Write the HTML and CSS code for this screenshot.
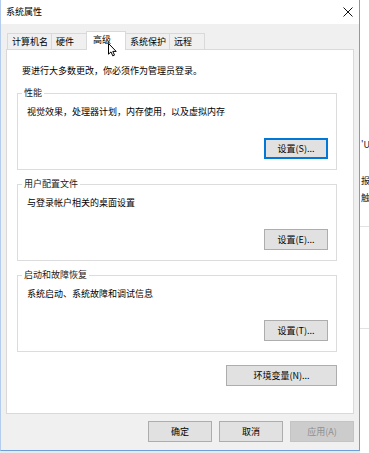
FILE: index.html
```html
<!DOCTYPE html>
<html lang="zh-CN">
<head>
  <meta charset="UTF-8" />
  <title>系统属性</title>
  <link rel="stylesheet" href="styles.css">
</head>
<body>
  <div class="desk">
    <div class="dialog">
      <div class="titlebar">
        <span class="title">系统属性</span>
        <svg class="close" width="10" height="10" viewBox="0 0 10 10">
          <path d="M0.5 0.5 L9.5 9.5 M9.5 0.5 L0.5 9.5" stroke="#111" stroke-width="1" fill="none" />
        </svg>
      </div>

      <div class="dialog-body">
        <div class="tabs">
          <div class="tab">计算机名</div>
          <div class="tab">硬件</div>
          <div class="tab active">高级
            <svg class="cursor" width="10" height="14" viewBox="0 0 10 14">
              <path d="M0.5 0.5 L0.5 11.2 L3 8.9 L4.8 12.9 L6.5 12.1 L4.8 8.4 L8.2 8.4 Z" fill="#fff" stroke="#000" stroke-width="1" stroke-linejoin="round" />
            </svg>
          </div>
          <div class="tab">系统保护</div>
          <div class="tab">远程</div>
        </div>

        <div class="panel">
          <p class="note">要进行大多数更改，你必须作为管理员登录。</p>

          <fieldset class="group">
            <legend>性能</legend>
            <p class="group-desc">视觉效果，处理器计划，内存使用，以及虚拟内存</p>
            <div class="group-actions">
              <button class="btn btn-default">设置(S)...</button>
            </div>
          </fieldset>

          <fieldset class="group">
            <legend>用户配置文件</legend>
            <p class="group-desc">与登录帐户相关的桌面设置</p>
            <div class="group-actions">
              <button class="btn">设置(E)...</button>
            </div>
          </fieldset>

          <fieldset class="group">
            <legend>启动和故障恢复</legend>
            <p class="group-desc">系统启动、系统故障和调试信息</p>
            <div class="group-actions">
              <button class="btn">设置(T)...</button>
            </div>
          </fieldset>

          <div class="panel-actions">
            <button class="btn btn-wide">环境变量(N)...</button>
          </div>
        </div>

        <div class="footer">
          <button class="btn">确定</button>
          <button class="btn">取消</button>
          <button class="btn" disabled>应用(A)</button>
        </div>
      </div>
    </div>

    <!-- window behind, barely visible -->
    <div class="peek">
      <div class="peek-line">'U</div>
      <div class="peek-line peek-gap">报</div>
      <div class="peek-line peek-near">触</div>
      <div class="peek-rule"></div>
      <div class="peek-rule peek-rule-low"></div>
    </div>
  </div>
</body>
</html>
```

FILE: styles.css
```css
* {
  box-sizing: border-box;
}

body {
  margin: 0;
  background: #e9e9e9;
  font-family: "Noto Sans CJK SC", sans-serif;
  font-size: 9px;
  color: #000;
}

.desk {
  display: flex;
  align-items: flex-start;
  height: 453px;
}

.dialog {
  width: 360px;
  height: 451px;
  display: flex;
  flex-direction: column;
  background: #f0f0f0;
  border: 1px solid #6f9fd8;
  border-top: none;
  border-left-color: #b4cdec;
}

.titlebar {
  height: 24px;
  background: #fff;
  display: flex;
  align-items: center;
  justify-content: space-between;
  padding: 0 6px 0 5px;
}

.title {
  line-height: 24px;
}

.close {
  display: block;
}

.dialog-body {
  padding: 7px 5px 0;
}

/* Tabs */
.tabs {
  display: flex;
  align-items: flex-end;
  height: 19px;
  margin-bottom: -1px;
  padding-left: 1px;
  position: relative;
  z-index: 1;
}

.tab {
  height: 16px;
  min-width: 36px;
  margin: 0 -1px 1px 0;
  padding: 0 3px 0 4px;
  border: 1px solid #d9d9d9;
  border-bottom: none;
  background: #f0f0f0;
  line-height: 15px;
  white-space: nowrap;
}

.tab.active {
  height: 19px;
  min-width: 40px;
  margin-bottom: 0;
  padding: 0 5px 0 6px;
  background: #fff;
  line-height: 16px;
  position: relative;
  z-index: 1;
}

.cursor {
  position: absolute;
  left: 21px;
  top: 11px;
  z-index: 5;
}

/* Panel */
.panel {
  background: #fff;
  border: 1px solid #d9d9d9;
  padding: 15px 16px 27px 10px;
}

.note {
  margin: 0 0 10px 5px;
  line-height: 12px;
}

.group {
  margin: 0;
  min-inline-size: 0;
  padding: 7px 8px 10px 4px;
  border: 1px solid #dcdcdc;
}

.group + .group {
  margin-top: 8px;
}

.group legend {
  padding: 0 2px;
  line-height: 12px;
  color: #1a1a1a;
}

.group-desc {
  margin: 0 0 20px 5px;
  line-height: 12px;
}

.group-actions,
.panel-actions {
  display: flex;
  justify-content: flex-end;
}

.panel-actions {
  margin-top: 13px;
}

/* Buttons */
.btn {
  width: 64px;
  height: 21px;
  padding: 0;
  background: #e1e1e1;
  border: 1px solid #adadad;
  font-family: inherit;
  font-size: 9px;
  color: #000;
}

.btn-default {
  border-color: #0078d7;
  box-shadow: inset 0 0 0 1px #0078d7;
}

.btn-wide {
  width: 111px;
}

.btn:disabled {
  background: #cccccc;
  border-color: #c4c4c4;
  color: #8f8f8f;
}

.footer {
  display: flex;
  justify-content: flex-end;
  gap: 7px;
  padding: 7px 0 8px;
}

/* Window peeking from behind */
.peek {
  flex: 1;
  height: 453px;
  background: #fff;
  padding-top: 139px;
  overflow: hidden;
  white-space: nowrap;
  font-size: 9px;
  color: #222;
}

.peek-line {
  line-height: 12px;
  padding-left: 1px;
}

.peek-gap {
  margin-top: 24px;
}

.peek-near {
  margin-top: 5px;
}

.peek-rule {
  margin-top: 22px;
  border-top: 1px solid #e2e2e2;
}

.peek-rule-low {
  margin-top: 101px;
}
```
